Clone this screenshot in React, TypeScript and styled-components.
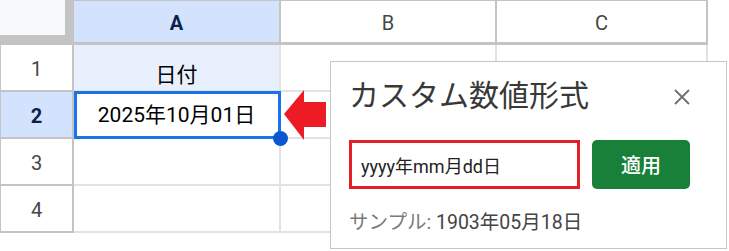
import React from "react";
import styled, { createGlobalStyle } from "styled-components";

const Global = createGlobalStyle`
  html, body { margin: 0; padding: 0; background: #ffffff; }
  body { font-family: Roboto, "Noto Sans CJK JP", sans-serif; }
  * { box-sizing: border-box; }
`;

const Stage = styled.div`
  position: relative;
  width: 729px;
  height: 251px;
  overflow: hidden;
  background: #fff;
`;

const Sheet = styled.div`
  display: grid;
  grid-template-columns: 74px 207px 216px 211px;
  grid-template-rows: 45px repeat(4, 47px);
  width: 708px;
`;

const Corner = styled.div`
  background: #c4c4c4;
  display: flex;
  align-items: flex-start;
`;

const CornerInner = styled.div`
  width: 65px;
  height: 35px;
  background: #f8f9fa;
`;

const ColHeader = styled.div<{ $active?: boolean }>`
  display: flex;
  align-items: center;
  justify-content: center;
  padding-top: 2px;
  border-top: 1px solid #c4c4c4;
  border-bottom: 3px solid #c4c4c4;
  border-right: 2px solid #c4c4c4;
  background: ${(p) => (p.$active ? "#d3e3fd" : "#ffffff")};
  color: ${(p) => (p.$active ? "#0b1f4a" : "#444746")};
  font-family: Roboto, sans-serif;
  font-size: 20px;
  font-weight: ${(p) => (p.$active ? 700 : 400)};
`;

const RowHeader = styled.div<{ $active?: boolean }>`
  display: flex;
  align-items: center;
  justify-content: center;
  padding-top: 2px;
  border-left: 1px solid #c4c4c4;
  border-right: 2px solid #c4c4c4;
  border-bottom: 2px solid #c4c4c4;
  background: ${(p) => (p.$active ? "#d3e3fd" : "#ffffff")};
  color: ${(p) => (p.$active ? "#0b1f4a" : "#444746")};
  font-family: Roboto, sans-serif;
  font-size: 20px;
  font-weight: ${(p) => (p.$active ? 700 : 400)};
`;

const Cell = styled.div<{ $bg?: string; $align?: "center" | "end" }>`
  position: relative;
  display: flex;
  justify-content: center;
  align-items: ${(p) => (p.$align === "end" ? "flex-end" : "center")};
  padding-bottom: ${(p) => (p.$align === "end" ? "3px" : "0")};
  border-right: 2px solid #e2e2e2;
  border-bottom: 2px solid #e2e2e2;
  background: ${(p) => p.$bg ?? "#ffffff"};
  color: #000;
  font-size: 21px;
  line-height: 24px;
  white-space: nowrap;
`;

const Selection = styled.div`
  position: absolute;
  z-index: 2;
  top: -1px;
  left: 0;
  right: -2px;
  bottom: -2px;
  border: 3px solid #1a73e8;
  pointer-events: none;
`;

const FillHandle = styled.div`
  position: absolute;
  z-index: 3;
  right: -9px;
  bottom: -9px;
  width: 15px;
  height: 15px;
  border-radius: 50%;
  background: #0b57d0;
`;

const Arrow = styled.svg`
  position: absolute;
  left: 283px;
  top: 89px;
`;

const Dialog = styled.div`
  position: absolute;
  z-index: 4;
  left: 330px;
  top: 61px;
  width: 397px;
  height: 188px;
  background: #fff;
  border: 1px solid #c6c6c6;
  padding: 16px 36px 0 18px;
  display: flex;
  flex-direction: column;
`;

const DialogHeader = styled.div`
  display: flex;
  align-items: center;
  justify-content: space-between;
  height: 36px;
`;

const Title = styled.div`
  font-size: 30px;
  line-height: 36px;
  color: #383838;
  font-weight: 400;
`;

const CloseIcon = styled.svg`
  margin-top: 2px;
  display: block;
`;

const FormRow = styled.div`
  display: flex;
  gap: 12px;
  margin-top: 26px;
`;

const FormatInput = styled.input`
  width: 231px;
  height: 49px;
  border: 3px solid #e51f27;
  padding: 0 0 0 9px;
  font-family: Roboto, "Noto Sans CJK JP", sans-serif;
  font-size: 18px;
  color: #222;
  outline: none;
  background: #fff;
`;

const ApplyButton = styled.button`
  width: 107px;
  height: 49px;
  border: none;
  border-radius: 5px;
  background: #188038;
  color: #fff;
  font-family: Roboto, "Noto Sans CJK JP", sans-serif;
  font-size: 20px;
  font-weight: 500;
  padding: 0;
`;

const Sample = styled.div`
  margin-top: 22px;
  font-size: 19.5px;
  line-height: 24px;
  white-space: nowrap;
`;

const SampleLabel = styled.span`
  color: #7a7a7a;
`;

const SampleValue = styled.span`
  color: #444;
`;

export default function App() {
  return (
    <>
      <Global />
      <Stage>
        <Sheet>
          <Corner>
            <CornerInner />
          </Corner>
          <ColHeader $active>A</ColHeader>
          <ColHeader>B</ColHeader>
          <ColHeader>C</ColHeader>

          <RowHeader>1</RowHeader>
          <Cell $bg="#e8f0fe" $align="end">日付</Cell>
          <Cell />
          <Cell />

          <RowHeader $active>2</RowHeader>
          <Cell>
            2025年10月01日
            <Selection />
            <FillHandle />
          </Cell>
          <Cell />
          <Cell />

          <RowHeader>3</RowHeader>
          <Cell />
          <Cell />
          <Cell />

          <RowHeader>4</RowHeader>
          <Cell />
          <Cell />
          <Cell />
        </Sheet>

        <Arrow width="45" height="52" viewBox="0 0 45 52">
          <polygon points="1,25 21,1 21,13 43,13 43,38 21,38 21,51" fill="#ed1c24" />
        </Arrow>

        <Dialog>
          <DialogHeader>
            <Title>カスタム数値形式</Title>
            <CloseIcon width="16" height="16" viewBox="0 0 16 16">
              <path d="M1 1 L15 15 M15 1 L1 15" stroke="#6f6f6f" strokeWidth="1.8" fill="none" />
            </CloseIcon>
          </DialogHeader>
          <FormRow>
            <FormatInput readOnly defaultValue="yyyy年mm月dd日" />
            <ApplyButton>適用</ApplyButton>
          </FormRow>
          <Sample>
            <SampleLabel>サンプル: </SampleLabel>
            <SampleValue>1903年05月18日</SampleValue>
          </Sample>
        </Dialog>
      </Stage>
    </>
  );
}
